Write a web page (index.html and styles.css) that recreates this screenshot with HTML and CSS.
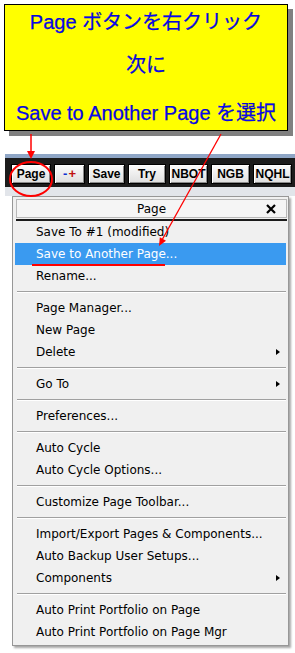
FILE: index.html
```html
<!DOCTYPE html>
<html>
<head>
<meta charset="utf-8">
<link rel="stylesheet" href="styles.css">
</head>
<body>
<div class="callout">
	<div class="callout_line">Page ボタンを右クリック</div>
	<div class="callout_line callout_mid">次に</div>
	<div class="callout_line callout_last">Save to Another Page を選択</div>
</div>

<div class="pg_toolbar">
	<span class="pg_btn pg_btnPage">Page</span>
	<span class="pg_btn pg_btnZoom"><b class="pg_minus">-</b><b class="pg_plus">+</b></span>
	<span class="pg_btn pg_btnSave">Save</span>
	<span class="pg_btn pg_btnTry">Try</span>
	<span class="pg_btn pg_btnWide">NBOT</span>
	<span class="pg_btn pg_btnWide">NGB</span>
	<span class="pg_btn pg_btnWide">NQHL</span>
	<span class="pg_btn pg_btnWide"></span>
</div>
<div class="pg_workspace"></div>

<div class="pg_menu">
	<div class="pg_menuHead">
		<span class="pg_menuTitle">Page</span>
		<svg class="pg_close" width="10" height="10" viewBox="0 0 10 10"><path d="M1 1L9 9M9 1L1 9" stroke="#000" stroke-width="2.2"/></svg>
	</div>
	<div class="pg_menuRule"></div>
	<div class="pg_item">Save To #1 (modified)</div>
	<div class="pg_item pg_itemHot">Save to Another Page...</div>
	<div class="pg_item">Rename...</div>
	<div class="pg_sep"></div>
	<div class="pg_item">Page Manager...</div>
	<div class="pg_item">New Page</div>
	<div class="pg_item pg_sub">Delete</div>
	<div class="pg_sep"></div>
	<div class="pg_item pg_sub">Go To</div>
	<div class="pg_sep"></div>
	<div class="pg_item">Preferences...</div>
	<div class="pg_sep"></div>
	<div class="pg_item">Auto Cycle</div>
	<div class="pg_item">Auto Cycle Options...</div>
	<div class="pg_sep"></div>
	<div class="pg_item">Customize Page Toolbar...</div>
	<div class="pg_sep"></div>
	<div class="pg_item">Import/Export Pages &amp; Components...</div>
	<div class="pg_item">Auto Backup User Setups...</div>
	<div class="pg_item pg_sub">Components</div>
	<div class="pg_sep"></div>
	<div class="pg_item">Auto Print Portfolio on Page</div>
	<div class="pg_item">Auto Print Portfolio on Page Mgr</div>
</div>

<!-- red marks drawn over the screenshot -->
<svg class="pg_marks" width="295" height="653" viewBox="0 0 295 653">
	<line x1="31" y1="134" x2="31" y2="152" stroke="#f00" stroke-width="1.5"/>
	<polygon points="27,151 35,151 31,159" fill="#f00"/>
	<ellipse cx="31" cy="179" rx="21" ry="17" fill="none" stroke="#f00" stroke-width="2"/>
	<line x1="221" y1="134" x2="162" y2="240" stroke="#f00" stroke-width="1.3"/>
	<polygon points="159,246 166,240.7 159.8,237.3" fill="#f00"/>
	<line x1="32" y1="265" x2="165" y2="265" stroke="#f00" stroke-width="2"/>
</svg>
</body>
</html>
```

FILE: styles.css
```css
body {
	margin: 0;
	width: 295px;
	height: 653px;
	overflow: hidden;
	background: #ffffff;
	position: relative;
}

.callout {
	margin: 4px 0 0 4px;
	width: 282px;
	padding: 5px 0;
	border: 1px solid #000000;
	background: #ffff00;
	box-shadow: 5px 5px 0 #808080;
	font-family: "Liberation Sans", "Noto Sans CJK JP", sans-serif;
	font-size: 20px;
	line-height: 24px;
	color: #0808f8;
	-webkit-text-stroke: 0.25px #000090;
	text-align: center;
	white-space: nowrap;
}
.callout_mid {
	margin-top: 19px;
}
.callout_last {
	margin-top: 24px;
}

.pg_toolbar {
	margin: 23px 0 0 5px;
	height: 23px;
	padding: 6px 0 0 6px;
	border-top: 4px solid #8fa6c6;
	background: #1c1c1c;
	display: flex;
	gap: 3px;
	overflow: hidden;
}
.pg_btn {
	flex: none;
	height: 18px;
	border: 1px solid #000000;
	background: linear-gradient(#fcfcfc, #dedede);
	box-shadow: inset 1px 1px 0 #ffffff, inset -1px -1px 0 #8a8a8a;
	font-family: "Liberation Sans", sans-serif;
	font-weight: bold;
	font-size: 12px;
	line-height: 18px;
	color: #000000;
	text-align: center;
}
.pg_btnPage { width: 38px; }
.pg_btnZoom { width: 29px; font-size: 13px; }
.pg_btnSave { width: 35px; }
.pg_btnTry { width: 36px; }
.pg_btnWide { width: 37px; }
.pg_minus { color: #1030d0; margin-right: 1px; }
.pg_plus { color: #c01010; }

.pg_workspace {
	margin-left: 5px;
	height: 9px;
	background: #e2e5ea;
}

.pg_menu {
	margin-left: 12px;
	width: 275px;
	padding: 2px 0;
	border: 1px solid #979797;
	background: #f0f0f0;
	box-shadow: 2px 2px 2px rgba(0, 0, 0, 0.35);
	font-family: "DejaVu Sans", sans-serif;
	font-size: 12px;
	color: #000000;
}
.pg_menuHead {
	margin: 0 1px 0 3px;
	height: 17px;
	border: 1px solid #b8b8b8;
	background: #f5f5f5;
	display: flex;
	align-items: center;
	justify-content: center;
	position: relative;
	font-size: 12px;
}
.pg_close {
	position: absolute;
	right: 10px;
	top: 4px;
}
.pg_menuRule {
	margin: 1px 1px 0 3px;
	height: 2px;
	background: #1a1a1a;
}
.pg_item {
	margin: 0 2px;
	height: 22px;
	padding: 0 6px 0 21px;
	line-height: 21px;
	display: flex;
	align-items: center;
	white-space: nowrap;
}
.pg_itemHot {
	background: #3a9af0;
	color: #ffffff;
}
.pg_sub::after {
	content: "";
	margin-left: auto;
	border-left: 4px solid #000000;
	border-top: 3.5px solid transparent;
	border-bottom: 3.5px solid transparent;
}
.pg_sep {
	margin: 4px 2px 4px 4px;
	border-top: 1px solid #a0a0a0;
	border-bottom: 1px solid #ffffff;
}

.pg_marks {
	position: absolute;
	left: 0;
	top: 0;
	pointer-events: none;
}
```
